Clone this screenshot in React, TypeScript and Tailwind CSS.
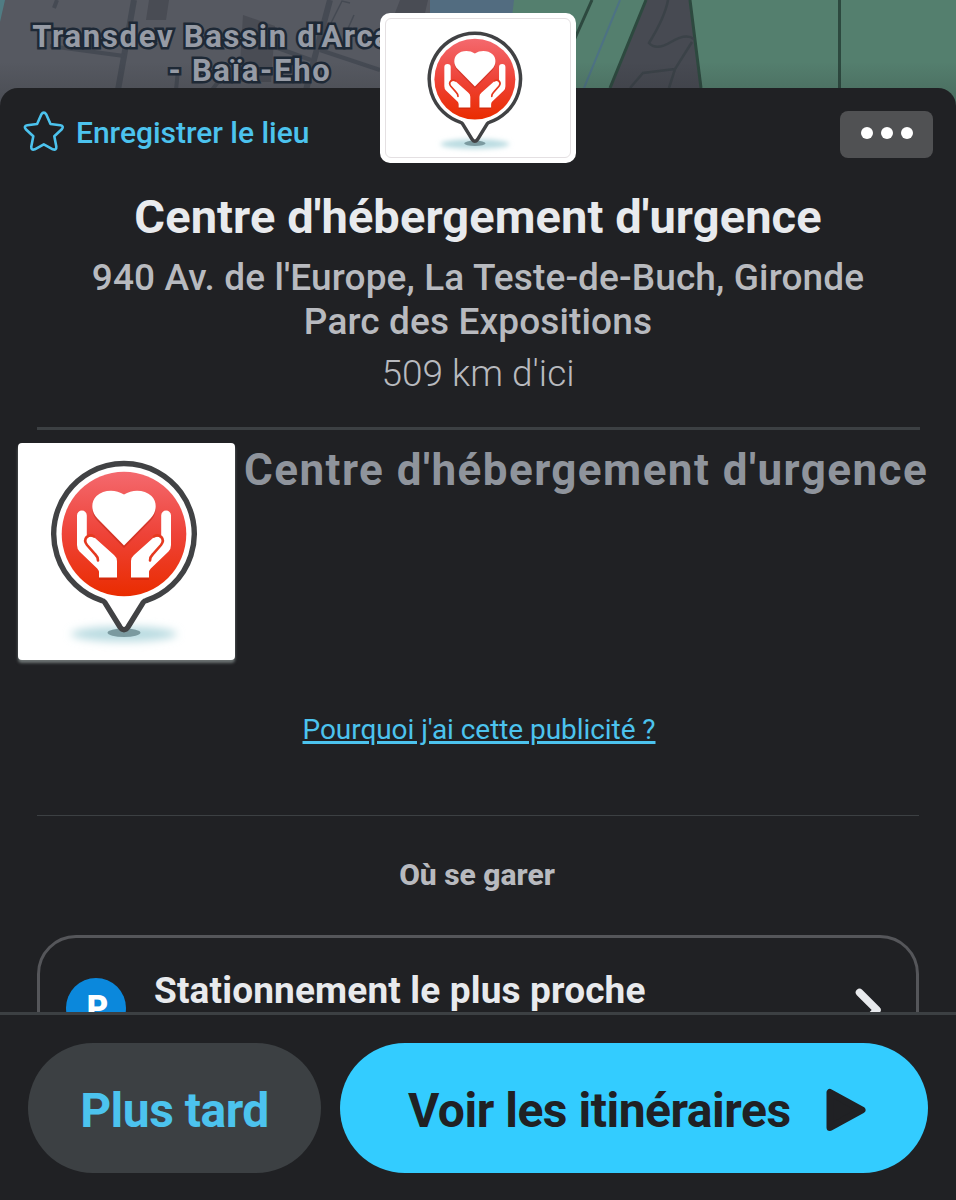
import { useId } from "react";

const HEART =
   "M106 102.500 79.500 75.500C73 69 72.500 59 78.500 53c7-6.500 19-7 27.500-1.500C114.500 46 126.500 46.500 133.500 53c6 6 5.500 16-1 22.500Z";

function PinLogo({ className }: { className: string }) {
   const id = useId();

   return (
      <svg viewBox="0 0 217 217" className={className} aria-hidden="true">
         <defs>
            <linearGradient id={`${id}red`} x1="0" y1="0" x2="0" y2="1">
               <stop offset="0" stopColor="#f4696e" />
               <stop offset="0.5" stopColor="#ee4338" />
               <stop offset="1" stopColor="#ea2c00" />
            </linearGradient>
            <filter id={`${id}blur`} x="-20%" y="-80%" width="140%" height="260%">
               <feGaussianBlur stdDeviation="4" />
            </filter>
         </defs>
         <ellipse cx="106" cy="191" rx="53" ry="7.500" fill="#b9dbe1" filter={`url(#${id}blur)`} />
         <ellipse cx="106" cy="189.800" rx="16.500" ry="4.200" fill="#7b9aa0" />
         <path
            d="M84 157.600a70.300 70.300 0 1 1 44 0q-1.500 0-2.600 1.600L110 184q-4 5.500-8 0L86.600 159.200q-1.100-1.600-2.600-1.600Z"
            fill="#fff"
            stroke="#414244"
            strokeWidth="5.400"
            strokeLinejoin="round"
         />
         <circle cx="106" cy="91" r="62.300" fill={`url(#${id}red)`} />
         <g fill="#a81c08" opacity="0.35" transform="translate(0 2.500)">
            <path d={HEART} />
            <path d="M81 128v6.500h18V121Zm50 0v6.500H113V121Z" />
         </g>
         <path d={HEART} fill="#fff" />
         <Hand />
         <g transform="translate(212 0) scale(-1 1)">
            <Hand />
         </g>
      </svg>
   );
}

function Hand() {
   return (
      <>
         <path
            d="M59 72.500a4.900 4.900 0 0 1 9.800 0V95L72.500 93.500q2.500-.500 4.500 1.500l19 17q3 2.500 3 6v16.500H81v-5q0-2-1.800-4L61.500 108.500q-2.500-2.500-2.500-6.500Z"
            fill="#fff"
         />
         <path
            d="M80 117.500q0-3.500-3-6.500l-8-9q-3.500-4.500-.3-8 3.500-3 7.300-.500"
            fill="none"
            stroke="#e5391f"
            strokeWidth="2.600"
            strokeLinecap="round"
         />
      </>
   );
}

function MapStrip() {
   return (
      <div className="relative h-[120px] shrink-0 overflow-hidden bg-[#565961]">
         <svg viewBox="0 0 956 120" className="block h-[120px] w-[956px]" aria-hidden="true">
            <defs>
               <linearGradient id="sheetShade" x1="0" y1="0" x2="0" y2="1">
                  <stop offset="0" stopColor="#202124" stopOpacity="0" />
                  <stop offset="1" stopColor="#202124" stopOpacity="0.3" />
               </linearGradient>
            </defs>
            <path d="M0 0h5L0 22Z" fill="#507c83" />
            <path d="M430 0h84v60h-84Z" fill="#526c80" />
            <path d="M514 0h442v120H500Z" fill="#547f6e" />
            <path d="M149 0h20l-3 20h-20ZM243 15l32 11-4 56h-32ZM400 0h28l-3 13h-30Z" fill="#494c54" />
            <g fill="none" stroke="#454a53">
               <path d="M134 0 118 90M330 0l-24 90" strokeWidth="6" />
               <path d="m57 0-3 8M50 46l74 10M320 50l60 20M275 47l36 13M178 70l-2 20M218 82l-6 8" strokeWidth="4" />
               <path d="m350 3-8-2-18 36M354 15l-8 18" strokeWidth="1.500" />
            </g>
            <path d="m646 0-36 88h92L690 0Z" fill="#474a52" />
            <path d="m646 0-36 88M690 0l11 88" stroke="#2d493f" strokeWidth="3" />
            <path
               d="M668 0q-3 17-19 43 7 8 22-1t23-3M692 42l-17 27-6 19M675 69l-32 4-13 15"
               fill="none"
               stroke="#3b4248"
               strokeWidth="2.500"
            />
            <path d="m592 0-24 54M839.500 0v90" stroke="#2d493f" strokeWidth="3" />
            <path d="m620 0-36 88" stroke="#4d7284" strokeWidth="2" />
            <path d="M0 62h956v58H0Z" fill="url(#sheetShade)" />
         </svg>
         <p className="absolute top-[20px] left-[31px] w-[438px] text-center text-[31px] leading-[34px] font-bold tracking-[1.700px] whitespace-nowrap text-[#969ba5] [paint-order:stroke_fill] [-webkit-text-stroke:5px_#1e2936]">
            Transdev Bassin d'Arcachon
            <br />- Baïa-Eho
         </p>
      </div>
   );
}

function Header() {
   return (
      <header className="mt-[23px] flex h-[47px] items-center justify-between pr-[23px] pl-[23px]">
         <button className="flex items-center gap-[11px] text-[#4cc3ee]">
            <svg viewBox="0 0 42 42" className="-mt-[5px] size-[42px]" fill="none" aria-hidden="true">
               <path
                  d="M18.300 3.500q2.500-3.800 5 0l4.200 9.500 9.800 1.200q4 .8 1.500 4l-7.500 7 2 10.300q.3 4.200-3.500 2.800l-9-5-9 5q-3.800 1.400-3.500-2.800l2-10.300-7.500-7q-2.500-3.200 1.500-4l9.800-1.200Z"
                  stroke="currentColor"
                  strokeWidth="2.600"
                  strokeLinejoin="round"
               />
            </svg>
            <span className="-mt-[4px] text-[30px] leading-[36px] font-medium tracking-[-0.020px]">Enregistrer le lieu</span>
         </button>
         <button className="flex h-[47px] w-[93px] items-center justify-center gap-2 rounded-lg bg-[#505153] pb-[3px]">
            <span className="size-3 rounded-full bg-white" />
            <span className="size-3 rounded-full bg-white" />
            <span className="size-3 rounded-full bg-white" />
         </button>
      </header>
   );
}

function ParkingCard() {
   return (
      <section className="mt-[42px] mr-[37px] ml-[37px] flex h-[160px] shrink-0 items-start rounded-[39px] border-[3px] border-[#55565a] pt-[40px] pl-[26px]">
         <span className="flex size-[60px] items-center justify-center rounded-full bg-[#0b88dc] pl-[3px] text-[33px] font-black text-white">
            P
         </span>
         <h3 className="-mt-[9px] ml-[28px] text-[37px] leading-[44px] font-bold tracking-[0.150px] whitespace-nowrap text-[#e8eaed]">
            Stationnement le plus proche
         </h3>
         <svg viewBox="0 0 28 48" className="mt-[8px] ml-[208px] h-[48px] w-[28px] shrink-0" fill="none" aria-hidden="true">
            <path d="m5.500 6.500 17.500 17.500L5.500 41.500" stroke="#e8eaed" strokeWidth="7.500" strokeLinecap="round" strokeLinejoin="round" />
         </svg>
      </section>
   );
}

function Footer() {
   return (
      <footer className="flex h-[188px] shrink-0 gap-[19px] border-t-[3px] border-[#3c4043] pt-[28px] pr-[28px] pl-[28px]">
         <button className="h-[130px] w-[293px] rounded-full bg-[#3c4043] pt-[5px] text-[48px] font-bold tracking-[-0.500px] text-[#4cc3ee]">
            Plus tard
         </button>
         <button className="flex h-[130px] w-[588px] items-center rounded-full bg-[#33ccff] pt-[6px] pl-[68px] text-[48px] font-bold tracking-[-0.480px] whitespace-nowrap text-[#202124]">
            Voir les itinéraires
            <svg viewBox="0 0 40 44" className="-mt-[2px] ml-[35px] h-[44px] w-[40px]" aria-hidden="true">
               <path d="M4 4.500v35L36 22Z" fill="currentColor" stroke="currentColor" strokeWidth="7" strokeLinejoin="round" />
            </svg>
         </button>
      </footer>
   );
}

export default function App() {
   return (
      <main className="flex h-[1200px] w-[956px] flex-col overflow-hidden font-['Roboto',sans-serif]">
         <MapStrip />
         <div className="relative -mt-[32px] flex h-[1112px] flex-col rounded-t-[18px] bg-[#202124]">
            <div className="absolute -top-[75px] left-[380px] h-[150px] w-[196px] rounded-[10px] bg-white p-[5px]">
               <div className="flex h-full justify-center rounded-md border border-[#e4e0e2]">
                  <PinLogo className="mt-[1px] -ml-[3px] size-[141px] shrink-0" />
               </div>
            </div>
            <div className="flex h-[924px] flex-col overflow-hidden">
               <Header />
               <h1 className="mt-[31px] text-center text-[47px] leading-[56px] font-bold tracking-[0.100px] whitespace-nowrap text-[#e8eaed]">
                  Centre d'hébergement d'urgence
               </h1>
               <p className="mt-[11px] text-center text-[37px] leading-[43.500px] font-medium tracking-[0.130px] whitespace-nowrap text-[#b8babf]">
                  940 Av. de l'Europe, La Teste-de-Buch, Gironde
                  <br />
                  Parc des Expositions
               </p>
               <p className="mt-[9px] text-center text-[37px] leading-[44px] font-light text-[#b8babf]">509 km d'ici</p>
               <hr className="mt-[31px] mr-[36px] ml-[37px] border-t-[3px] border-[#3c4043]" />
               <section className="mt-[13px] ml-[18px] flex items-start gap-[9px]">
                  <div className="size-[217px] shrink-0 rounded bg-white shadow-[0_3px_3px_#6b7272]">
                     <PinLogo className="size-[217px]" />
                  </div>
                  <h2 className="text-[44px] leading-[55px] font-bold tracking-[1.450px] whitespace-nowrap text-[#8f949c]">
                     Centre d'hébergement d'urgence
                  </h2>
               </section>
               <a
                  href="#"
                  className="mt-[54px] ml-[2px] self-center text-[28px] leading-[32px] tracking-[-0.060px] text-[#4cc3ee] underline decoration-[2.500px]"
               >
                  Pourquoi j'ai cette publicité ?
               </a>
               <hr className="mt-[69px] mr-[37px] ml-[37px] border-[#3c4043]" />
               <h2 className="mt-[41px] mr-[2px] text-center text-[30px] leading-[36px] font-extrabold text-[#b8babf]">
                  Où se garer
               </h2>
               <ParkingCard />
            </div>
            <Footer />
         </div>
      </main>
   );
}
